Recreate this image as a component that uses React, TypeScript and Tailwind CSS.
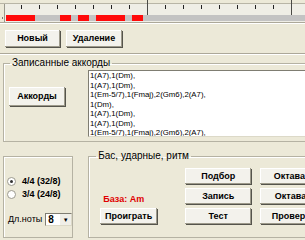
import React from "react";

const chords = [
  "1(A7),1(Dm),",
  "1(A7),1(Dm),",
  "1(Em-5/7),1(Fmaj),2(Gm6),2(A7),",
  "1(Dm),",
  "1(A7),1(Dm),",
  "1(A7),1(Dm),",
  "1(Em-5/7),1(Fmaj),2(Gm6),2(A7),",
];

const redParts: [number, number][] = [
  [6, 35],
  [60, 71],
  [78, 89],
  [96, 125],
  [132, 143],
];

function Btn({ label, className = "" }: { label: string; className?: string }) {
  return (
    <button
      type="button"
      className={
        "flex items-center justify-center bg-[#f3f2ec] text-[9px] font-bold leading-none text-black shadow-[inset_-1px_-1px_0_#9d9a8b,inset_1px_1px_0_#fff,1px_1px_0_#55544c] " +
        className
      }
    >
      {label}
    </button>
  );
}

function Radio({ checked, label }: { checked?: boolean; label: string }) {
  return (
    <div className="flex h-[13px] items-center gap-[6px]">
      <span className="flex h-[9px] w-[9px] items-center justify-center rounded-full border border-[#9c9a8f] bg-white">
        {checked ? <span className="h-[3px] w-[3px] rounded-full bg-[#333]" /> : null}
      </span>
      <span className="text-[9px] font-bold leading-none">{label}</span>
    </div>
  );
}

function Timeline() {
  const ticks = Array.from({ length: 16 }, (_, i) => 21 + i * 18);
  return (
    <svg width="305" height="24" className="block">
      <line x1="0" y1="3.5" x2="305" y2="3.5" stroke="#b8b5a6" />
      <rect x="4" y="4" width="301" height="18" fill="#efeee6" />
      <line x1="4.5" y1="4" x2="4.5" y2="22" stroke="#9a988c" />
      {ticks.map((x) =>
        x === 147 || x === 291 ? (
          <line key={x} x1={x + 0.5} y1="0" x2={x + 0.5} y2="16" stroke="#4a4a46" />
        ) : (
          <line key={x} x1={x + 0.5} y1="5" x2={x + 0.5} y2="9" stroke="#222" />
        )
      )}
      <rect x="6" y="15" width="299" height="6" fill="#c3c3c3" />
      {redParts.map(([a, b]) => (
        <rect key={a} x={a} y="15" width={b - a} height="6" fill="#ff0a0a" />
      ))}
      <rect x="2" y="17" width="1" height="2" fill="#777" />
      <line x1="0" y1="22.5" x2="305" y2="22.5" stroke="#aca899" />
      <line x1="0" y1="23.5" x2="305" y2="23.5" stroke="#fff" />
    </svg>
  );
}

export default function App() {
  return (
    <div className="relative h-[240px] w-[305px] overflow-hidden bg-[#ece9d8] font-['Liberation_Sans',Arial,sans-serif] text-black">
      <Timeline />

      <div className="mt-[6px] flex gap-[6px] pl-[5px]">
        <Btn label="Новый" className="h-[17px] w-[55px]" />
        <Btn label="Удаление" className="h-[17px] w-[56px]" />
      </div>

      <div className="mt-[6px] w-full border-t border-b border-t-[#aca899] border-b-white" />

      <fieldset className="ml-[3px] mt-[3px] w-[330px] border border-[#b5b2a3] pb-[4px] shadow-[inset_1px_1px_0_#fff]">
        <legend className="ml-[6px] px-[2px] text-[10px] leading-[10px]">Записанные аккорды</legend>
        <div className="mt-[2px] flex pl-[5px]">
          <Btn label="Аккорды" className="mt-[17px] h-[19px] w-[56px]" />
          <div className="ml-[23px] h-[67px] w-[240px] overflow-hidden border border-t-[#7f7d72] border-l-[#7f7d72] border-r-[#dcd9c8] border-b-[#dcd9c8] bg-white pl-[1px] text-[7.8px] leading-[9.5px] whitespace-pre">
            {chords.map((c, i) => (
              <div key={i}>{c}</div>
            ))}
          </div>
        </div>
      </fieldset>

      <div className="mt-[9px] flex items-start">
        <fieldset className="ml-[3px] mt-[5px] h-[82px] w-[70px] border border-[#b5b2a3] shadow-[inset_1px_1px_0_#fff]">
          <div className="flex flex-col pl-[3px] pt-[18px]">
            <Radio checked label="4/4 (32/8)" />
            <Radio label="3/4 (24/8)" />
            <div className="mt-[12px] flex items-center gap-[3px] pl-[1px]">
              <span className="text-[9px] leading-none">Дл.ноты</span>
              <div className="flex h-[13px] w-[27px] items-center border border-t-[#7f7d72] border-l-[#7f7d72] border-r-[#dcd9c8] border-b-[#dcd9c8] bg-white">
                <span className="flex-1 pl-[2px] text-[10px] font-bold leading-none">8</span>
                <span className="flex h-[11px] w-[11px] items-center justify-center bg-[#f0efe8] text-[6px] leading-none">▼</span>
              </div>
            </div>
          </div>
        </fieldset>

        <fieldset className="ml-[15px] h-[87px] w-[250px] shrink-0 border border-[#b5b2a3] shadow-[inset_1px_1px_0_#fff]">
          <legend className="ml-[7px] px-[2px] text-[10px] leading-[10px]">Бас, ударные, ритм</legend>
          <div className="grid grid-cols-[76px_66px_66px] grid-rows-[16px_16px_16px] gap-x-[9px] gap-y-[4px] pl-[11px] pt-[7px]">
            <div />
            <Btn label="Подбор" className="h-[16px]" />
            <Btn label="Октава +" className="h-[16px]" />
            <div className="flex items-end pl-[3px] text-[9px] font-bold leading-[10px] text-[#e00000]">База: Am</div>
            <Btn label="Запись" className="h-[16px]" />
            <Btn label="Октава -" className="h-[16px]" />
            <Btn label="Проиграть" className="h-[16px] w-[57px]" />
            <Btn label="Тест" className="h-[16px]" />
            <Btn label="Проверка" className="h-[16px]" />
          </div>
        </fieldset>
      </div>
    </div>
  );
}
